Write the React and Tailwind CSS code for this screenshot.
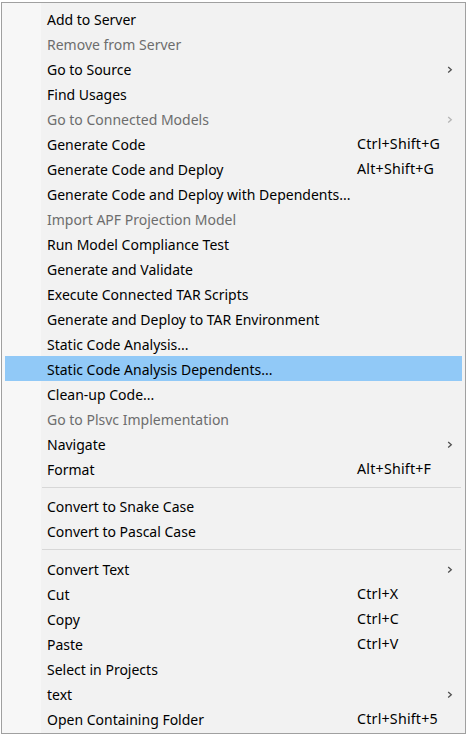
import React from "react";

const items = [
  { t: "Add to Server" },
  { t: "Remove from Server", d: true },
  { t: "Go to Source", a: true },
  { t: "Find Usages" },
  { t: "Go to Connected Models", d: true, a: true },
  { t: "Generate Code", k: "Ctrl+Shift+G" },
  { t: "Generate Code and Deploy", k: "Alt+Shift+G" },
  { t: "Generate Code and Deploy with Dependents..." },
  { t: "Import APF Projection Model", d: true },
  { t: "Run Model Compliance Test" },
  { t: "Generate and Validate" },
  { t: "Execute Connected TAR Scripts" },
  { t: "Generate and Deploy to TAR Environment" },
  { t: "Static Code Analysis..." },
  { t: "Static Code Analysis Dependents...", h: true },
  { t: "Clean-up Code..." },
  { t: "Go to Plsvc Implementation", d: true },
  { t: "Navigate", a: true },
  { t: "Format", k: "Alt+Shift+F" },
  { sep: "h-[12px]" },
  { t: "Convert to Snake Case" },
  { t: "Convert to Pascal Case" },
  { sep: "h-[13px]" },
  { t: "Convert Text", a: true },
  { t: "Cut", k: "Ctrl+X" },
  { t: "Copy", k: "Ctrl+C" },
  { t: "Paste", k: "Ctrl+V" },
  { t: "Select in Projects" },
  { t: "text", a: true },
  { t: "Open Containing Folder", k: "Ctrl+Shift+5" },
];

function Chevron({ disabled }) {
  return (
    <svg width="6" height="8" viewBox="0 0 6 8" className="block">
      <path
        d="M1.2 1 L4.3 3.8 L1.2 6.6"
        fill="none"
        stroke={disabled ? "#b5b5b5" : "#505050"}
        strokeWidth="1.3"
      />
    </svg>
  );
}

export default function App() {
  return (
    <div
      className="w-[468px] h-[735px] bg-white overflow-hidden pt-[2px] pl-[1px]"
      style={{ fontFamily: '"Noto Sans", "Open Sans", sans-serif' }}
    >
      <div className="relative w-[465px] h-[732px] border border-[#a0a0a0] bg-[#f2f2f2] pt-[3px] px-[2px]">
        <div className="absolute left-0 top-0 bottom-0 w-[39px] bg-[#f7f7f7]" />
        <div className="relative">
          {items.map((it, i) =>
            it.sep ? (
              <div key={i} className={`${it.sep} flex items-center pl-[38px] pr-[2px]`}>
                <div className="h-px w-full bg-[#d7d7d7]" />
              </div>
            ) : (
              <div
                key={i}
                className={`flex h-[25px] items-center pt-[2px] pl-[42px] text-[14px] leading-none ${
                  it.h ? "bg-[#91c9f7]" : ""
                } ${it.d ? "text-[#6d6d6d]" : "text-black"} ml-[1px] mr-[1px]`}
              >
                <span className="w-[310px] shrink-0 whitespace-nowrap">{it.t}</span>
                <span className="w-[90px] shrink-0 whitespace-nowrap text-[14.25px] tracking-[0.2px]">{it.k || ""}</span>
                <span className="flex w-[10px] justify-start">{it.a ? <Chevron disabled={it.d} /> : null}</span>
              </div>
            )
          )}
        </div>
      </div>
    </div>
  );
}
